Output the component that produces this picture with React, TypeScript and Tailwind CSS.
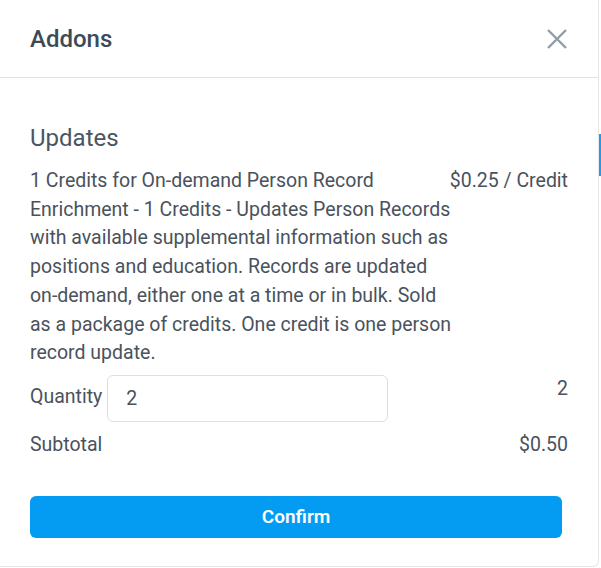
export default function App() {
  return (
    <div className="relative w-[601px] h-[568px] bg-white overflow-hidden" style={{ fontFamily: 'Roboto, "Noto Sans", sans-serif' }}>
      <div className="absolute right-0 top-[134px] h-[42px] w-[2px] bg-[#1e9bf0]" />
      <div className="w-[599px] h-[567px] bg-white border-r border-b border-[#e3e6ea] rounded-br-md flex flex-col">
        <div className="flex items-center justify-between h-[78px] pl-[30px] pr-[32px] border-b border-[#dfe3e8]">
          <h2 className="text-[24px] font-medium text-[#3c4a57]">Addons</h2>
          <button className="text-[#8f9ca9] translate-x-[1px]">
            <svg width="20" height="20" viewBox="0 0 20 20" fill="none" stroke="currentColor" strokeWidth="2.4">
              <path d="M1 1 L19 19 M19 1 L1 19" />
            </svg>
          </button>
        </div>

        <div className="px-[30px] pt-[44px] text-[#4a525c]">
          <h3 className="text-[24px] leading-[32px] text-[#4b5562]">Updates</h3>

          <div className="flex mt-[13px] text-[19.5px] leading-[28.7px]">
            <p className="w-[423px] shrink-0">
              1 Credits for On-demand Person Record Enrichment - 1 Credits - Updates Person Records with available
              supplemental information such as positions and education. Records are updated on-demand, either one at a
              time or in bulk. Sold as a package of credits. One credit is one person record update.
            </p>
            <div className="flex-1 min-w-0 flex justify-end whitespace-nowrap">
              <span>$0.25 / Credit</span>
            </div>
          </div>

          <div className="flex items-start mt-[7px] text-[19.5px]">
            <label className="pt-[8px] leading-[28px]">Quantity</label>
            <input
              className="ml-[5px] w-[281px] h-[47px] border border-[#dcdfe3] rounded-md px-[18px] text-[19.5px] text-[#4a525c] outline-none"
              defaultValue="2"
            />
            <div className="flex-1 text-right leading-[28px]">2</div>
          </div>

          <div className="flex justify-between mt-[9px] text-[19.5px] leading-[28px]">
            <span>Subtotal</span>
            <span>$0.50</span>
          </div>

          <button className="mt-[37px] w-[532px] h-[42px] rounded-md bg-[#039cf2] text-white text-[19px] font-semibold">
            Confirm
          </button>
        </div>
      </div>
    </div>
  );
}
